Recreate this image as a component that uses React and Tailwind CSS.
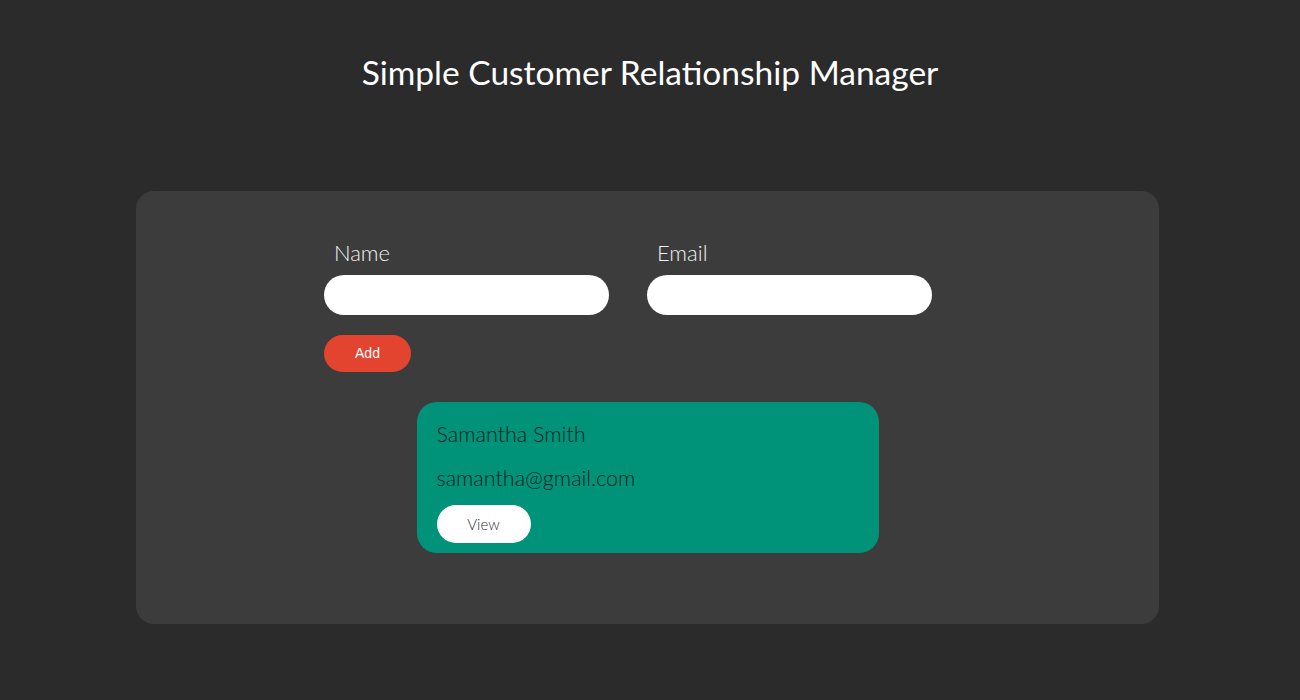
import React from 'react';

export default function App() {
  return (
    <div className="min-h-[700px] bg-[#2b2b2b] pt-[50px] font-['Lato',sans-serif]">
      <h1 className="text-center text-[33.5px] leading-[44px] text-white">Simple Customer Relationship Manager</h1>

      <div className="ml-[136px] mt-[97px] h-[433px] w-[1023px] rounded-[18px] bg-[#3c3c3c] pt-[40px]">
        <div className="mx-auto w-[647px]">
          <div className="flex gap-[38px]">
            <div className="flex flex-col">
              <label className="ml-[10px] text-[22px] font-light leading-[44px] text-[#f0f0f0]">Name</label>
              <input className="h-[40px] w-[285px] rounded-full bg-white px-4 outline-none" />
            </div>
            <div className="flex flex-col">
              <label className="ml-[10px] text-[22px] font-light leading-[44px] text-[#f0f0f0]">Email</label>
              <input className="h-[40px] w-[285px] rounded-full bg-white px-4 outline-none" />
            </div>
          </div>
          <button className="mt-[20px] h-[37px] w-[87px] rounded-full bg-[#e34430] font-['Liberation_Sans',sans-serif] text-[14px] text-white">Add</button>
        </div>

        <div className="mx-auto mt-[30px] h-[151px] w-[462px] rounded-[20px] bg-[#009379] px-[20px] pt-[18px]">
          <div className="text-[21.5px] font-light leading-[28px] text-[#0a1c1e]">Samantha Smith</div>
          <div className="mt-[16px] text-[21.5px] font-light leading-[28px] text-[#0a1c1e]">samantha@gmail.com</div>
          <button className="mt-[13px] h-[38px] w-[94px] rounded-full bg-white text-[15px] font-light text-[#333]">View</button>
        </div>
      </div>
    </div>
  );
}
